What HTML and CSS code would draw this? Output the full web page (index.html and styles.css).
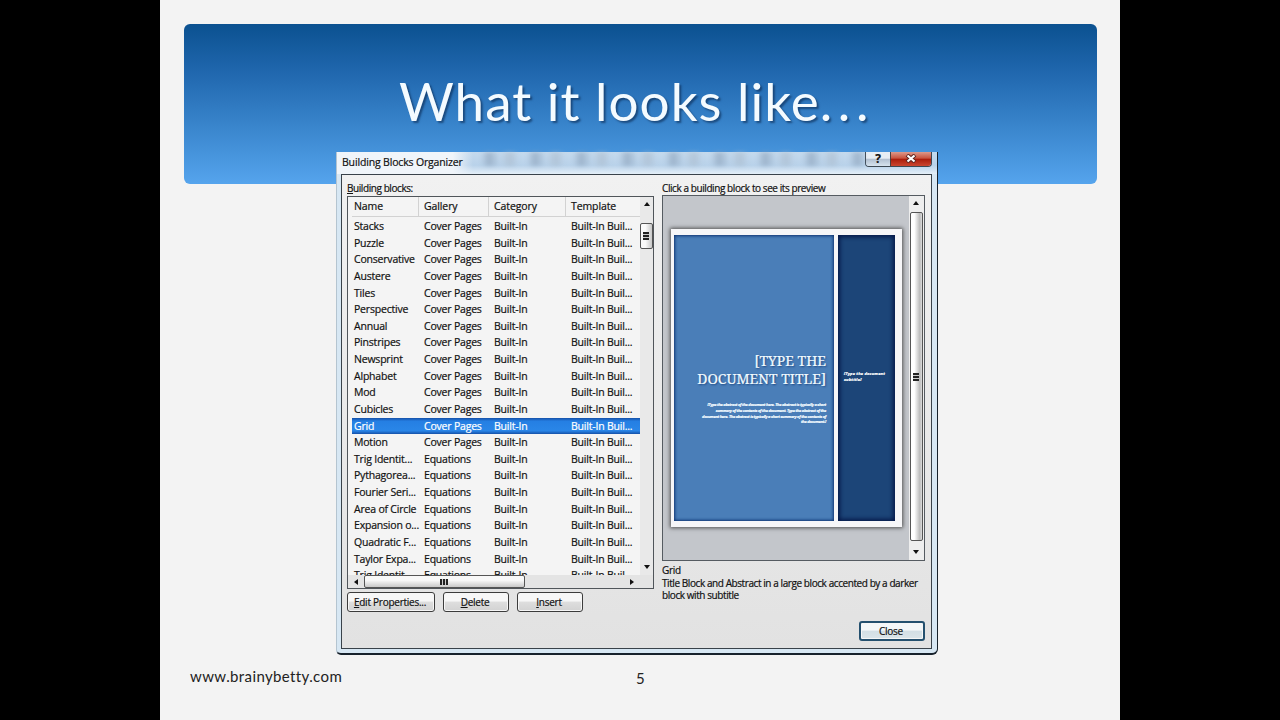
FILE: index.html
```html
<!DOCTYPE html>
<html lang="en">
<head>
  <meta charset="UTF-8">
  <title>What it looks like…</title>
  <link rel="stylesheet" href="styles.css">
</head>
<body>
  <div class="slide">
    <div class="banner"><h1>What it looks like<span class="dots">...</span></h1></div>

    <div class="dialog">
      <div class="titlebar">
        <span class="caption">Building Blocks Organizer</span>
        <div class="smudges"></div>
        <div class="window-buttons">
          <span class="help">?</span>
          <span class="close-x"><svg width="12" height="9" viewBox="0 0 12 9"><path d="M2 1l8 7M10 1L2 8" stroke="#5b2420" stroke-width="4"/><path d="M2.5 1.5l7 6M9.5 1.5l-7 6" stroke="#fff" stroke-width="2.2"/></svg></span>
        </div>
      </div>

      <div class="client">
        <div class="left">
          <div class="label"><u>B</u>uilding blocks:</div>
          <div class="list-box">
            <div class="list-main">
              <div class="list">
                <div class="row head"><span>Name</span><span>Gallery</span><span>Category</span><span>Template</span></div>
                <div id="rows" class="rows"></div>
              </div>
              <div class="vscroll">
                <i class="arrow up"></i>
                <div class="vthumb"><i class="grip"></i></div>
                <i class="arrow down"></i>
              </div>
            </div>
            <div class="hscroll">
              <i class="arrow prev"></i>
              <div class="hthumb"><i class="grip upright"></i></div>
              <i class="arrow next"></i>
            </div>
          </div>
          <div class="buttons">
            <button class="edit"><u>E</u>dit Properties...</button>
            <button><u>D</u>elete</button>
            <button><u>I</u>nsert</button>
          </div>
        </div>

        <div class="right">
          <div class="label preview-label">Click a building block to see its preview</div>
          <div class="preview">
            <div class="canvas">
              <div class="page">
                <div class="block">
                  <div class="doc-title">[TYPE THE<br>DOCUMENT TITLE]</div>
                  <div class="abstract">[Type the abstract of the document here. The abstract is typically a short<br>summary of the contents of the document. Type the abstract of the<br>document here. The abstract is typically a short summary of the contents of<br>the document.]</div>
                </div>
                <div class="side">[Type the document<br>subtitle]</div>
              </div>
            </div>
            <div class="vscroll big">
              <i class="arrow up"></i>
              <div class="vthumb"><i class="grip"></i></div>
              <i class="arrow down"></i>
            </div>
          </div>
          <div class="desc-name">Grid</div>
          <div class="desc">Title Block and Abstract in a large block accented by a darker<br>block with subtitle</div>
          <button class="close-btn">Close</button>
        </div>
      </div>
    </div>

    <div class="footer"><span class="site">www.brainybetty.com</span><span class="num">5</span></div>
  </div>

  <script>
    const covers = ['Stacks', 'Puzzle', 'Conservative', 'Austere', 'Tiles', 'Perspective', 'Annual', 'Pinstripes', 'Newsprint', 'Alphabet', 'Mod', 'Cubicles', 'Grid', 'Motion'];
    const equations = ['Trig Identit...', 'Pythagorea...', 'Fourier Seri...', 'Area of Circle', 'Expansion o...', 'Quadratic F...', 'Taylor Expa...', 'Trig Identit...'];
    const rows = document.getElementById('rows');

    function addRow(name, gallery) {
      const row = document.createElement('div');
      row.className = name === 'Grid' ? 'row selected' : 'row';
      [name, gallery, 'Built-In', 'Built-In Buil...'].forEach(text => {
        const cell = document.createElement('span');
        cell.textContent = text;
        row.appendChild(cell);
      });
      rows.appendChild(row);
    }

    covers.forEach(name => addRow(name, 'Cover Pages'));
    equations.forEach(name => addRow(name, 'Equations'));
  </script>
</body>
</html>
```
FILE: styles.css
```css
* {
  box-sizing: border-box;
}
body {
  margin: 0;
  background: #000;
  overflow: hidden;
}
.slide {
  width: 960px;
  height: 720px;
  margin: 0 auto;
  padding: 24px 23px 0 24px;
  background: #f3f3f3;
  font-family: "Open Sans", "Noto Sans", sans-serif;
}
.banner {
  height: 160px;
  border-radius: 6px;
  background: linear-gradient(#0b5190, #2067ae 30%, #3a86cd 65%, #55a4ed);
}
h1 {
  margin: 0;
  padding: 45px 0 0 215px;
  font: 400 53px/64px Lato, sans-serif;
  letter-spacing: 1px;
  color: #f4fbff;
  white-space: nowrap;
  text-shadow: 2px 2px 2px rgba(10, 40, 80, 0.6);
}
.dots {
  letter-spacing: 5.6px;
}

/* dialog window */
.dialog {
  position: relative;
  width: 602px;
  height: 503px;
  margin: -32px 0 0 152px;
  padding: 0 5px 5px 4px;
  border: solid #17212b;
  border-width: 0 1px 2px 1px;
  border-left-color: #b4c4d0;
  border-radius: 0 0 6px 5px;
  background: #d7e7f3;
  color: #111;
  font-size: 10.5px;
  -webkit-text-stroke: 0.2px;
}
.titlebar {
  display: flex;
  height: 22px;
  margin: 0 -5px 0 -4px;
  background: linear-gradient(#c5daed, #b9d2ea 60%, #e4eff8);
}
.caption {
  width: 136px;
  padding-left: 5px;
  line-height: 20px;
  letter-spacing: -0.16px;
  white-space: nowrap;
  background: linear-gradient(90deg, #f0f5fa 85%, transparent);
}
.smudges {
  flex: 1;
  height: 14px;
  background: repeating-linear-gradient(90deg, transparent 0 8px, #879db5 16px, transparent 27px, #a9bacb 37px, transparent 46px);
  filter: blur(2px);
  opacity: 0.6;
}
.window-buttons {
  display: flex;
  width: 67px;
  height: 15px;
  margin-right: 5px;
  border: 1px solid #3c4853;
  border-top: 0;
  border-radius: 0 0 4px 4px;
}
.help {
  width: 25px;
  border-right: 1px solid #4b4040;
  border-radius: 0 0 0 3px;
  background: linear-gradient(#e6edf4 45%, #b0bfd0 50%, #d7e3ee);
  text-align: center;
  font: bold 12px/13px "Open Sans", sans-serif;
}
.close-x {
  flex: 1;
  display: flex;
  align-items: center;
  justify-content: center;
  padding-bottom: 2px;
  border-radius: 0 0 3px 0;
  background: linear-gradient(#dc9a8c, #c9523d 45%, #a91c0b 50%, #cb4630);
}
.client {
  display: flex;
  gap: 8px;
  height: 475px;
  padding: 6px 6px 0 5px;
  border: 1px solid #39424a;
  background: linear-gradient(#f1f1f1, #e2e2e2);
}
.left {
  width: 307px;
}
.label {
  height: 15px;
  font-size: 10px;
  line-height: 14px;
  letter-spacing: -0.42px;
  white-space: nowrap;
}
u {
  text-underline-offset: 1px;
}

/* building block list */
.list-box {
  height: 393px;
  border: 1px solid #50555a;
  background: #f4f4f4;
}
.list-main {
  display: flex;
  height: 378px;
}
.list {
  flex: 1;
  overflow: hidden;
}
.row {
  display: grid;
  grid-template-columns: 70px 70px 77px 1fr;
  height: 16.64px;
  margin-left: 4px;
  padding-left: 2px;
  line-height: 16.6px;
  white-space: nowrap;
}
.rows {
  padding-top: 1px;
  letter-spacing: -0.2px;
}
.head {
  height: 20px;
  line-height: 19px;
  letter-spacing: -0.1px;
  border-bottom: 1px solid #d2d2d2;
}
.head span + span {
  margin-left: -6px;
  padding-left: 5px;
  border-left: 1px solid #d2d2d2;
}
.selected {
  background: linear-gradient(#1550a8, #257fe3 20%, #2a86e8 80%, #1550a8);
  color: #fff;
}

/* scrollbars */
.vscroll {
  display: flex;
  flex-direction: column;
  align-items: center;
  width: 13px;
  padding: 5px 0 6px;
  background: #e9e9e9;
}
.vthumb {
  display: flex;
  align-items: center;
  justify-content: center;
  width: 13px;
  height: 26px;
  margin: 17px 0 auto;
  border: 1px solid #555;
  border-radius: 2px;
  background: linear-gradient(90deg, #fafafa 40%, #c8c8c8);
}
.arrow {
  border: 3px solid transparent;
}
.up {
  border-top: 0;
  border-bottom: 4px solid #111;
}
.down {
  border-bottom: 0;
  border-top: 4px solid #111;
}
.prev {
  border-left: 0;
  border-right: 4px solid #111;
}
.next {
  border-right: 0;
  border-left: 4px solid #111;
}
.grip {
  width: 6px;
  height: 8px;
  margin-right: 1px;
  background: repeating-linear-gradient(#222 0 2px, #ccc 2px 3px);
}
.upright {
  width: 8px;
  height: 6px;
  background: repeating-linear-gradient(90deg, #222 0 2px, #ccc 2px 3px);
}
.hscroll {
  display: flex;
  align-items: center;
  height: 13px;
  padding: 0 19px 0 6px;
  background: #e4e4e4;
}
.hthumb {
  display: flex;
  align-items: center;
  justify-content: center;
  width: 161px;
  height: 13px;
  margin: 0 auto 0 6px;
  border: 1px solid #555;
  border-radius: 2px;
  background: linear-gradient(#f8f8f8 40%, #c9c9c9);
}
.buttons {
  display: flex;
  gap: 8px;
  margin-top: 3px;
}
button {
  width: 66px;
  height: 20px;
  padding: 0 2px 0 0;
  border: 1px solid #3c3c3c;
  border-radius: 3px;
  background: linear-gradient(#f7f7f7 45%, #dedede 50%, #d2d2d2);
  box-shadow: inset 0 0 0 1px #f6f6f6;
  color: #111;
  font: 10px/16px "Open Sans", sans-serif;
  letter-spacing: -0.25px;
  -webkit-text-stroke: 0.2px;
}
.edit {
  width: 88px;
}

/* preview side */
.right {
  display: flex;
  flex-direction: column;
  width: 263px;
}
.preview-label {
  height: 14px;
}
.preview {
  display: flex;
  height: 366px;
  border: 1px solid #555b61;
  background: #c3c6cb;
}
.canvas {
  flex: 1;
  padding: 33px 0 0 8px;
}
.page {
  display: flex;
  gap: 4px;
  width: 231px;
  height: 298px;
  padding: 6px 7px 6px 3px;
  background: #f6f6f8;
  box-shadow: 0 0 4px 1px #505050;
}
.block {
  width: 160px;
  padding: 117px 8px 0 0;
  background: #4a7eb8;
  box-shadow: inset 0 0 3px 1px #0e3472;
  color: #f2fbff;
  text-align: right;
  white-space: nowrap;
}
.doc-title {
  font: 14px/18px "Noto Serif", "DejaVu Serif", "Liberation Serif", serif;
  text-shadow: 1px 1px 2px #1c4680;
}
.abstract {
  margin-top: 14px;
  font: italic bold 4px/5.8px "Open Sans", sans-serif;
  letter-spacing: -0.26px;
}
.side {
  width: 57px;
  padding: 136px 0 0 6px;
  background: #1c4578;
  box-shadow: inset 0 0 4px 2px #06194a;
  color: #fff;
  font: italic bold 4px/6px "Open Sans", sans-serif;
  letter-spacing: 0.2px;
  white-space: nowrap;
}
.big {
  width: 15px;
  padding-right: 1px;
  background: #eee;
}
.big .vthumb {
  flex: 1;
  margin: 7px 0 9px;
  background: linear-gradient(90deg, #fff 30%, #bbb 80%, #ddd);
}
.desc-name {
  margin-top: 2px;
  font-size: 10px;
  line-height: 14px;
  letter-spacing: -0.3px;
}
.desc {
  margin-top: 1px;
  font-size: 10px;
  line-height: 11.5px;
  letter-spacing: -0.42px;
  white-space: nowrap;
}
.close-btn {
  align-self: flex-end;
  margin-top: 20px;
  border: 2px solid #24506e;
  background: linear-gradient(#f4f7f8 45%, #d3dfe5 50%, #dbe5e9);
}

.footer {
  display: flex;
  padding: 11px 0 0 6px;
  font: 15px/20px Lato, sans-serif;
  color: #222;
}
.site {
  width: 446px;
  letter-spacing: 0.38px;
}
.num {
  padding-top: 2px;
}
```
